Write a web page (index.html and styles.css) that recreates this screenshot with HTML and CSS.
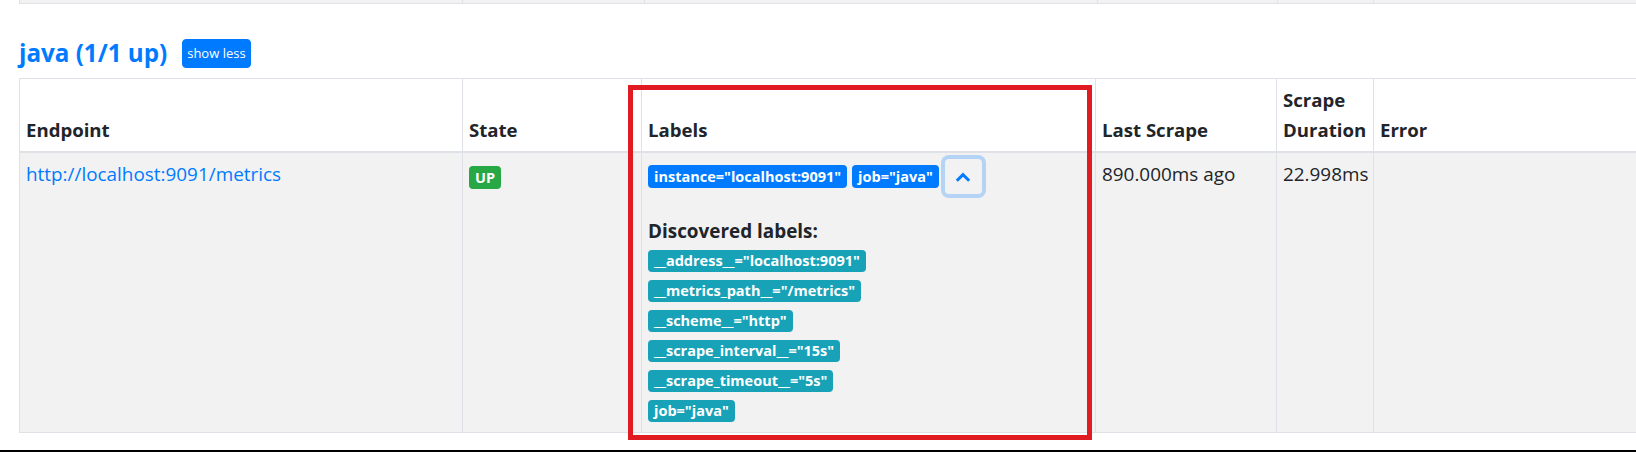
FILE: index.html
```html
<!DOCTYPE html>
<html>
<head>
<meta charset="utf-8">
<title>Targets</title>
<link rel="stylesheet" href="styles.css">
</head>
<body>
<div class="page">
  <div class="prev-row">
    <div class="pc pc-endpoint"></div>
    <div class="pc pc-state"></div>
    <div class="pc pc-labels"></div>
    <div class="pc pc-last"></div>
    <div class="pc pc-dur"></div>
    <div class="pc pc-error"></div>
  </div>

  <div class="pool-head">
    <h3 class="pool-title"><a href="#pool-java">java (1/1 up)</a></h3>
    <button class="btn-xs" type="button">show less</button>
  </div>

  <table class="targets">
    <colgroup>
      <col class="c-endpoint">
      <col class="c-state">
      <col class="c-labels">
      <col class="c-last">
      <col class="c-dur">
      <col class="c-error">
    </colgroup>
    <thead>
      <tr>
        <th>Endpoint</th>
        <th>State</th>
        <th>Labels</th>
        <th>Last Scrape</th>
        <th>Scrape Duration</th>
        <th>Error</th>
      </tr>
    </thead>
    <tbody>
      <tr>
        <td><a class="endpoint" href="#metrics">http://localhost:9091/metrics</a></td>
        <td><span class="badge badge-success">UP</span></td>
        <td>
          <div class="label-row">
            <span class="badge badge-primary">instance="localhost:9091"</span>
            <span class="badge badge-primary">job="java"</span>
            <button class="toggle" type="button" aria-label="hide discovered labels">
              <svg class="chev" width="16" height="10" viewBox="0 0 16 10"><path d="M1.8 8.8 L8 2.6 L14.2 8.8" fill="none" stroke="#007bff" stroke-width="3" stroke-linejoin="miter"/></svg>
            </button>
          </div>
          <div class="discovered-title">Discovered labels:</div>
          <div class="discovered-item"><span class="badge badge-info">__address__="localhost:9091"</span></div>
          <div class="discovered-item"><span class="badge badge-info">__metrics_path__="/metrics"</span></div>
          <div class="discovered-item"><span class="badge badge-info">__scheme__="http"</span></div>
          <div class="discovered-item"><span class="badge badge-info">__scrape_interval__="15s"</span></div>
          <div class="discovered-item"><span class="badge badge-info">__scrape_timeout__="5s"</span></div>
          <div class="discovered-item"><span class="badge badge-info">job="java"</span></div>
        </td>
        <td class="nowrap">890.000ms ago</td>
        <td class="nowrap">22.998ms</td>
        <td></td>
      </tr>
    </tbody>
  </table>

  <div class="edge"></div>
  <div class="highlight"></div>
</div>
</body>
</html>
```

FILE: styles.css
```css
html, body {
  margin: 0;
  padding: 0;
  background: #fff;
  overflow: hidden;
}

.page {
  position: relative;
  width: 1636px;
  height: 452px;
  overflow: hidden;
  padding-left: 19px;
  box-sizing: border-box;
  font-family: "Open Sans", "Noto Sans", sans-serif;
  font-size: 18.9px;
  line-height: 30px;
  color: #212529;
}

/* tail of the previous pool's table */
.prev-row {
  display: flex;
  height: 4px;
  width: 1700px;
}
.pc {
  box-sizing: border-box;
  height: 4px;
  background: #f2f2f2;
  border-right: 1px solid #dee2e6;
  border-bottom: 1px solid #dee2e6;
}
.pc-endpoint { width: 444px; border-left: 1px solid #dee2e6; }
.pc-state { width: 182px; }
.pc-labels { width: 453px; }
.pc-last { width: 180px; }
.pc-dur { width: 96px; }
.pc-error { flex: 1; border-right: 0; }

/* pool header */
.pool-head {
  display: flex;
  align-items: center;
  gap: 15px;
  height: 30px;
  margin: 34px 0 10px;
}
.pool-title {
  margin: 0;
  font-size: 24.2px;
  font-weight: 700;
  line-height: 30px;
}
.pool-title a {
  color: #007bff;
  text-decoration: none;
}
.btn-xs {
  font-family: "Open Sans", "Noto Sans", sans-serif;
  font-size: 13px;
  line-height: 23px;
  padding: 2px 4px;
  color: #fff;
  background: #007bff;
  border: 1px solid #007bff;
  border-radius: 4px;
}

/* table */
.targets {
  border-collapse: collapse;
  table-layout: fixed;
  width: 1681px;
  border: 1px solid #dee2e6;
}
.c-endpoint { width: 443px; }
.c-state { width: 179px; }
.c-labels { width: 454px; }
.c-last { width: 181px; }
.c-dur { width: 97px; }
.c-error { width: 327px; }

.targets th,
.targets td {
  border: 1px solid #dee2e6;
  padding: 6px;
  text-align: left;
}
.targets th {
  vertical-align: bottom;
  font-size: 18.6px;
  font-weight: 700;
  border-bottom: 2px solid #dee2e6;
  background: #fff;
}
.targets td {
  vertical-align: top;
  background: #f2f2f2;
}
.nowrap { white-space: nowrap; }

.endpoint {
  color: #007bff;
  text-decoration: none;
}

/* badges */
.badge {
  display: inline-block;
  height: 23px;
  line-height: 23px;
  padding: 0 6px;
  font-size: 14.5px;
  font-weight: 700;
  color: #fff;
  border-radius: 4px;
  white-space: nowrap;
  vertical-align: middle;
}
.badge-primary { background: #007bff; }
.badge-success { background: #28a745; margin-top: 3px; }
.badge-info { background: #17a2b8; height: 22px; line-height: 22px; }

.label-row {
  display: flex;
  align-items: center;
  gap: 5px;
  height: 35px;
}
.toggle {
  width: 37px;
  height: 35px;
  margin-left: 1px;
  padding: 0;
  display: flex;
  align-items: center;
  justify-content: center;
  background: transparent;
  border: 1px solid transparent;
  border-radius: 4px;
  box-shadow: 0 0 0 4px rgba(0, 123, 255, 0.25);
}
.chev { display: block; }

.discovered-title {
  margin-top: 22px;
  font-weight: 700;
  height: 30px;
}
.discovered-item {
  height: 30px;
  display: flex;
  align-items: center;
}

.edge {
  margin: 17px 0 0 -19px;
  height: 2px;
  background: #000;
  width: 1636px;
}

/* annotation overlay */
.highlight {
  position: absolute;
  left: 628px;
  top: 85px;
  width: 464px;
  height: 355px;
  box-sizing: border-box;
  border: 5px solid #e11b22;
  pointer-events: none;
}
```
